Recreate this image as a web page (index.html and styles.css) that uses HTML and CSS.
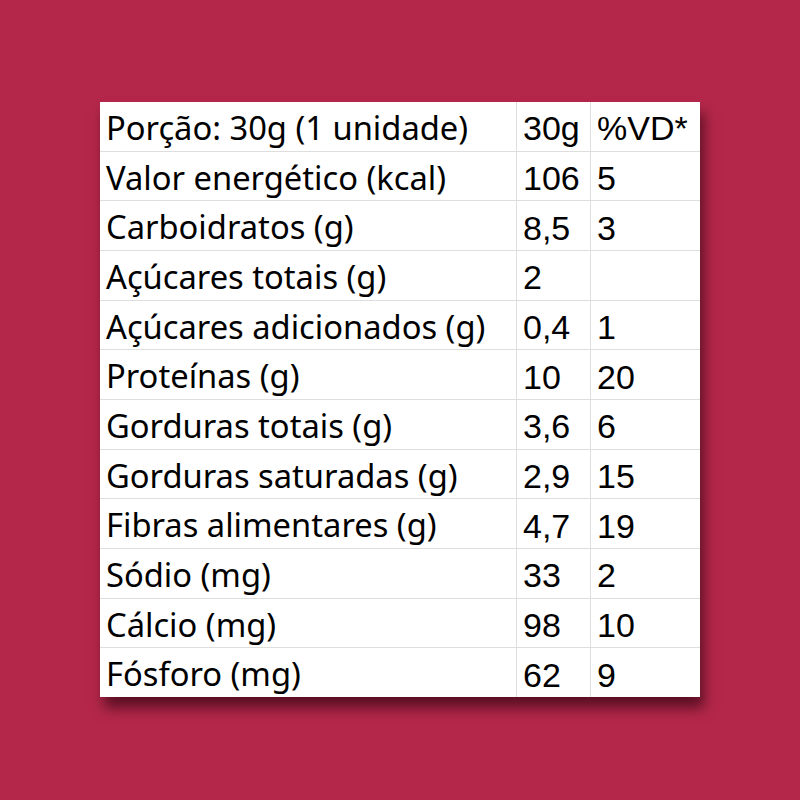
FILE: index.html
```html
<!DOCTYPE html>
<html lang="pt">
<head>
<meta charset="utf-8">
<link rel="stylesheet" href="styles.css">
</head>
<body>
<div class="card">
  <div class="grid">
    <div class="c name">Porção: 30g (1 unidade)</div><div class="c num">30g</div><div class="c num">%VD*</div>
    <div class="c name">Valor energético (kcal)</div><div class="c num">106</div><div class="c num">5</div>
    <div class="c name">Carboidratos (g)</div><div class="c num">8,5</div><div class="c num">3</div>
    <div class="c name">Açúcares totais (g)</div><div class="c num">2</div><div class="c num"></div>
    <div class="c name">Açúcares adicionados (g)</div><div class="c num">0,4</div><div class="c num">1</div>
    <div class="c name">Proteínas (g)</div><div class="c num">10</div><div class="c num">20</div>
    <div class="c name">Gorduras totais (g)</div><div class="c num">3,6</div><div class="c num">6</div>
    <div class="c name">Gorduras saturadas (g)</div><div class="c num">2,9</div><div class="c num">15</div>
    <div class="c name">Fibras alimentares (g)</div><div class="c num">4,7</div><div class="c num">19</div>
    <div class="c name">Sódio (mg)</div><div class="c num">33</div><div class="c num">2</div>
    <div class="c name">Cálcio (mg)</div><div class="c num">98</div><div class="c num">10</div>
    <div class="c name">Fósforo (mg)</div><div class="c num">62</div><div class="c num">9</div>
  </div>
</div>
</body>
</html>
```
FILE: styles.css
```css
html, body {
  margin: 0;
  padding: 0;
  background: #b4274a;
  width: 800px;
  height: 800px;
  overflow: hidden;
}
body {
  padding-top: 102px;
  padding-left: 100px;
  box-sizing: border-box;
}
.card {
  width: 600px;
  height: 595px;
  background: #dedede;
  box-shadow: 4px 11px 12px rgba(35, 0, 12, 0.6);
}
.grid {
  display: grid;
  grid-template-columns: 416px 73px 109px;
  grid-auto-rows: 48.67px;
  column-gap: 1px;
  row-gap: 1px;
}
.c {
  background: #fff;
  color: #000;
  display: flex;
  align-items: center;
  line-height: 1;
  padding-top: 4px;
  box-sizing: border-box;
  white-space: nowrap;
}
.name {
  font-family: "Noto Sans", "DejaVu Sans", sans-serif;
  font-size: 32.7px;
  padding-left: 6px;
}
.num {
  font-family: "Liberation Sans", Arial, sans-serif;
  font-size: 34px;
  padding-left: 6px;
}
```
